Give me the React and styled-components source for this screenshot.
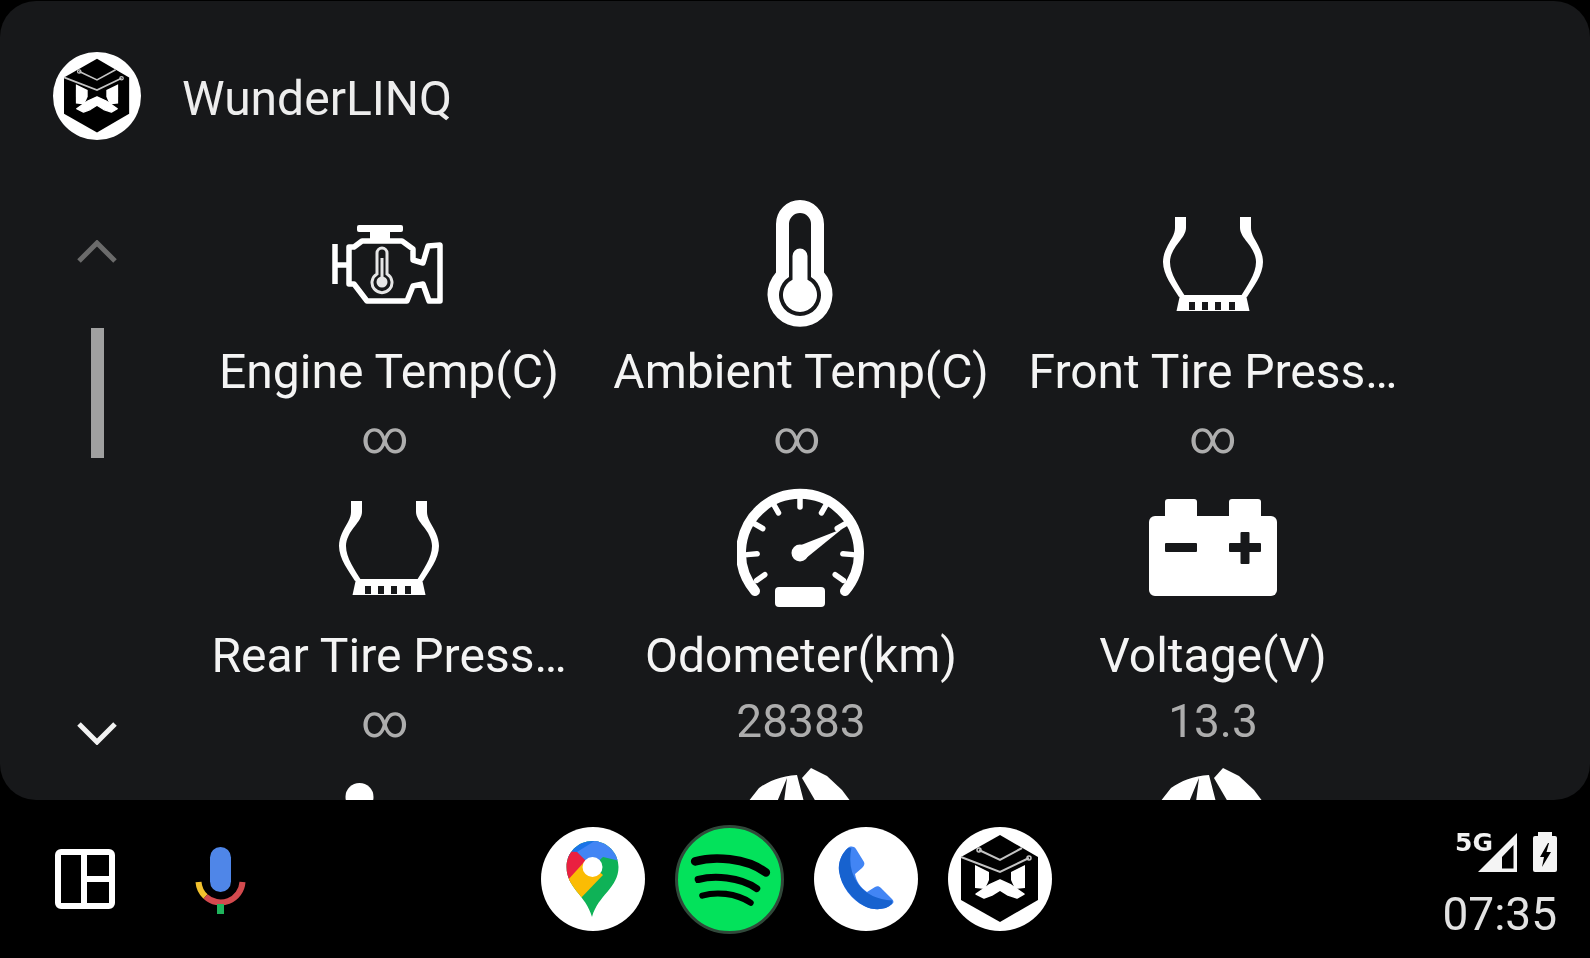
import React from 'react';
import styled, { createGlobalStyle } from 'styled-components';

const GlobalStyle = createGlobalStyle`
	html, body {
		margin: 0;
		padding: 0;
		background: #000;
		font-family: 'Roboto', 'Liberation Sans', sans-serif;
	}
`;

const Screen = styled.div`
	width: 1590px;
	height: 958px;
	padding-top: 1px;
	box-sizing: border-box;
	background: #000;
	display: flex;
	flex-direction: column;
	overflow: hidden;
	filter: blur(0.7px);
`;

const Panel = styled.main`
	height: 799px;
	flex-shrink: 0;
	background: #17181a;
	border-radius: 36px;
	overflow: hidden;
`;

const Header = styled.header`
	height: 199px;
	box-sizing: border-box;
	padding: 51px 0 0 53px;
	display: flex;
	align-items: flex-start;
	gap: 41px;
`;

const Title = styled.h1`
	margin: 0;
	font-size: 48px;
	font-weight: 400;
	line-height: 94px;
	color: #ededed;
`;

const Body = styled.div`
	display: flex;
`;

const Rail = styled.div`
	width: 183px;
	flex-shrink: 0;
	box-sizing: border-box;
	padding: 40px 0 0 11px;
	display: flex;
	flex-direction: column;
	align-items: center;
`;

const Thumb = styled.div`
	width: 13px;
	height: 130px;
	margin: 65px 0 264px;
	background: #a0a0a0;
`;

const Grid = styled.div`
	display: grid;
	grid-template-columns: repeat(3, 412px);
	grid-auto-rows: 284px;
`;

const Cell = styled.div`
	display: flex;
	flex-direction: column;
	align-items: center;
`;

const IconBox = styled.div`
	width: 128px;
	height: 128px;
	flex-shrink: 0;
	svg {
		display: block;
	}
`;

const Label = styled.div`
	margin-top: 14px;
	font-size: 48px;
	line-height: 60px;
	color: #f4f4f4;
	white-space: nowrap;
`;

const Value = styled.div`
	font-size: 46px;
	line-height: 70px;
	color: #adadad;
	padding-right: ${(p) => p.$shift || 0}px;
`;

const Bar = styled.footer`
	flex: 1;
	display: flex;
	align-items: center;
`;

const LeftGroup = styled.div`
	width: 541px;
	flex-shrink: 0;
	box-sizing: border-box;
	padding-left: 55px;
	display: flex;
	align-items: center;
	gap: 80px;
	svg {
		display: block;
	}
`;

const MicWrap = styled.div`
	margin-top: 3px;
`;

const Dock = styled.div`
	display: flex;
	align-items: center;
	gap: 30px;
`;

const AppIcon = styled.div`
	width: ${(p) => p.$size || 104}px;
	height: ${(p) => p.$size || 104}px;
	flex-shrink: 0;
	border-radius: 50%;
	svg {
		display: block;
	}
`;

const Status = styled.div`
	margin-left: auto;
	padding-right: 33px;
	align-self: flex-start;
	margin-top: 32px;
	display: flex;
	flex-direction: column;
	align-items: flex-end;
`;

const StatusIcons = styled.div`
	display: flex;
	align-items: flex-end;
	gap: 16px;
	svg {
		display: block;
	}
`;

const Signal = styled.div`
	position: relative;
	width: 39px;
	height: 40px;
	display: flex;
	align-items: flex-end;
`;

const NetBadge = styled.span`
	position: absolute;
	right: 24px;
	top: -1px;
	font-family: 'DejaVu Sans', sans-serif;
	font-size: 25px;
	font-weight: 700;
	line-height: 24px;
	color: #f2f2f2;
`;

const Clock = styled.div`
	margin-top: 12px;
	font-size: 46px;
	line-height: 60px;
	color: #e2e2e2;
`;

const WHITE = '#fff';
const PANEL = '#17181a';

const WunderLogo = ({ size }) => (
	<svg width={size} height={size} viewBox="0 0 104 104">
		<circle cx="52" cy="52" r="52" fill={WHITE} />
		<polygon points="52,8 90,30 90,73 52,95 13,73 13,30" fill="#000" />
		<g fill="none" stroke="#c4c4c4" strokeWidth="2">
			<polyline points="13,30 52,45 81,31" />
			<polyline points="31,23 52,33 74,21" />
		</g>
		<circle cx="31" cy="23" r="2" fill="none" stroke="#c4c4c4" strokeWidth="1.5" />
		<circle cx="81" cy="31" r="2" fill="none" stroke="#c4c4c4" strokeWidth="1.5" />
		<polygon points="27,38 41,45 41,53 37,62 27,61" fill={WHITE} />
		<polygon points="77,38 63,45 63,53 67,62 77,61" fill={WHITE} />
		<polygon points="28,67 41,58 52,53 63,58 76,67 69,71 60,68 52,63 44,68 36,71" fill={WHITE} stroke={WHITE} strokeWidth="1.5" strokeLinejoin="round" />
	</svg>
);

const ChevronUp = () => (
	<svg width="40" height="23" viewBox="0 0 40 23">
		<polyline points="2,21 20,3 38,21" fill="none" stroke="#6b6b6b" strokeWidth="5" />
	</svg>
);

const ChevronDown = () => (
	<svg width="40" height="23" viewBox="0 0 40 23">
		<polyline points="2,2 20,20 38,2" fill="none" stroke="#f2f2f2" strokeWidth="5" />
	</svg>
);

const EngineIcon = () => (
	<svg width="128" height="128" viewBox="0 0 128 128">
		<rect x="32" y="25" width="46" height="7" rx="2" fill={WHITE} />
		<rect x="45" y="31" width="20" height="10" fill={WHITE} />
		<g fill="none" stroke={WHITE} strokeWidth="5.5" strokeLinejoin="round">
			<polyline points="10,44 10,84" />
			<polyline points="10,65 24,65" />
			<path d="M24,47 L29,47 L37,41 L77,41 L88,49 L88,60 L98,63 L103,46 L115,45 L115,101 L104,101 L98,84 L88,86 L82,101 L42,101 L29,84 L24,84 Z" />
		</g>
		<path d="M52,53 a5,5 0 0 1 10,0 V74 a10,10 0 1 1 -10,0 Z" fill="none" stroke="#e6e6e6" strokeWidth="3" />
		<rect x="55.5" y="58" width="3" height="20" fill="#e6e6e6" />
		<circle cx="57" cy="82" r="5.5" fill="#e6e6e6" />
	</svg>
);

const ThermometerIcon = () => (
	<svg width="128" height="128" viewBox="0 0 128 128">
		<path d="M39,24 a24,24 0 0 1 48,0 V72.4 a32.5,32.5 0 1 1 -48,0 Z" fill={WHITE} />
		<path d="M52,24 a11,11 0 0 1 22,0 V77.1 a21,21 0 1 1 -22,0 Z" fill={PANEL} />
		<path d="M55.5,56 a7.5,7.5 0 0 1 15,0 V79.7 a17,17 0 1 1 -15,0 Z" fill={WHITE} />
	</svg>
);

const TIRE_WALL = 'M26,17 H37 V28 C37,33 33,38 30,42 C25,48 21,55 21,62 C21,74 30,86 36,96 L30,97 C24,87 14,75 14,62 C14,53 19,45 23,38 C25,34 26,31 26,28 Z';

const TireIcon = () => (
	<svg width="128" height="128" viewBox="0 0 128 128">
		<g fill={WHITE}>
			<path d={TIRE_WALL} />
			<path transform="translate(128 0) scale(-1 1)" d={TIRE_WALL} />
			<path d="M31,95 H97 L100.5,111 H27.5 Z" />
		</g>
		{[40, 53, 66, 80].map((x) => <rect key={x} x={x} y="102" width="6" height="8" fill={PANEL} />)}
	</svg>
);

const GaugeIcon = () => {
	const ticks = [-125, -95, -60, -30, 0, 30, 60, 95, 125];
	return (
		<svg width="128" height="128" viewBox="0 0 128 128">
			<path d="M18,107 A59,59 0 1 1 108,107" fill="none" stroke={WHITE} strokeWidth="10" strokeLinecap="round" />
			{ticks.map((a) => (
				<line key={a} x1="63" y1="13" x2="63" y2="23" stroke={WHITE} strokeWidth="5.5" strokeLinecap="round" transform={`rotate(${a} 63 66)`} />
			))}
			<circle cx="63" cy="69" r="8.5" fill={WHITE} />
			<polygon points="105,45 68,75 59,63" fill={WHITE} />
			<rect x="38" y="103" width="50" height="20" rx="4" fill={WHITE} />
		</svg>
	);
};

const BatteryIcon = () => (
	<svg width="128" height="128" viewBox="0 0 128 128">
		<rect x="16" y="15" width="32" height="24" rx="3" fill={WHITE} />
		<rect x="80" y="15" width="32" height="24" rx="3" fill={WHITE} />
		<rect x="0" y="32" width="128" height="80" rx="6" fill={WHITE} />
		<rect x="16" y="59" width="32" height="9" rx="1" fill={PANEL} />
		<rect x="80" y="59" width="32" height="9" rx="1" fill={PANEL} />
		<rect x="91.5" y="48" width="9" height="32" rx="1" fill={PANEL} />
	</svg>
);

const DotIcon = () => (
	<svg width="128" height="128" viewBox="0 0 128 128">
		<circle cx="34.5" cy="29" r="14" fill={WHITE} />
	</svg>
);

const DomeIcon = () => (
	<svg width="128" height="128" viewBox="0 0 128 128">
		<path d="M11,34 L22,20 C32,13 44,8 60,7 L67,34 H47 L50,10 L40,34 Z" fill={WHITE} />
		<path d="M74,0 L90,8 L105,22 L114,34 H79 L65,10 Z" fill={WHITE} />
	</svg>
);

const LayoutIcon = () => (
	<svg width="60" height="60" viewBox="0 0 60 60">
		<rect x="3" y="3" width="54" height="54" rx="3" fill="none" stroke={WHITE} strokeWidth="6" />
		<line x1="29" y1="3" x2="29" y2="57" stroke={WHITE} strokeWidth="6" />
		<line x1="29" y1="30" x2="57" y2="30" stroke={WHITE} strokeWidth="6" />
	</svg>
);

const MicIcon = () => (
	<svg width="52" height="68" viewBox="0 0 52 68">
		<rect x="15" y="0" width="21" height="45" rx="10.5" fill="#4f86e8" />
		<path d="M3.5,35 A22,22 0 0 0 10.5,49.5" fill="none" stroke="#f2c12e" strokeWidth="6" />
		<path d="M10.5,49.5 A22,22 0 0 0 47.5,35" fill="none" stroke="#d34a4e" strokeWidth="6" />
		<rect x="22" y="57" width="7" height="10" fill="#1fb45c" />
	</svg>
);

const PIN = 'M51.5,14 C37,14 25.5,25.5 25.5,40 C25.5,61 45,68 51,90 C57,68 77.5,61 77.5,40 C77.5,25.5 66,14 51.5,14 Z';

const MapsLogo = () => (
	<svg width="104" height="104" viewBox="0 0 104 104">
		<circle cx="52" cy="52" r="52" fill={WHITE} />
		<clipPath id="pinClip">
			<path d={PIN} />
		</clipPath>
		<g clipPath="url(#pinClip)">
			<rect x="20" y="10" width="64" height="84" fill="#0fb257" />
			<polygon points="20,10 60,10 51,40 20,30" fill="#1a73e8" />
			<polygon points="60,10 84,10 84,35 62,30 51,40 36,25" fill="#4285f4" />
			<polygon points="20,24 36,25 51,40 26,58 20,58" fill="#ea2040" />
			<polygon points="26,54 45,33 62,48 38,73 30,65" fill="#fbbc04" />
		</g>
		<circle cx="51.5" cy="40" r="10" fill={WHITE} />
	</svg>
);

const SpotifyLogo = () => (
	<svg width="109" height="109" viewBox="0 0 108 108">
		<circle cx="54" cy="54" r="52.5" fill="#03e25b" stroke="#31483a" strokeWidth="3" />
		<g fill="none" stroke="#000" strokeLinecap="round">
			<path d="M20,36 C38,31 70,32 90,47" strokeWidth="8.5" />
			<path d="M23,54 C38,50 64,51 81,63" strokeWidth="7" />
			<path d="M27,70 C40,66 60,67 75,77" strokeWidth="6" />
		</g>
	</svg>
);

const HANDSET = 'M34,21 C36,19 40,19 42,22 L50,35 C51,37 50,39 48,41 L41,47 C42,54 47,61 53,65 L61,60 C63,59 65,59 67,61 L78,72 C80,74 80,76 78,77 C72,83 60,84 50,79 C38,73 27,60 25,44 C24,35 28,26 34,21 Z';

const PhoneLogo = () => (
	<svg width="104" height="104" viewBox="0 0 104 104">
		<circle cx="52" cy="52" r="52" fill={WHITE} />
		<clipPath id="handsetClip">
			<path d={HANDSET} />
		</clipPath>
		<path d={HANDSET} fill="#4285f4" />
		<path d="M31,20 C25,50 42,78 78,80" fill="none" stroke="#1762cf" strokeWidth="13" clipPath="url(#handsetClip)" />
	</svg>
);

const SignalIcon = () => (
	<svg width="39" height="39" viewBox="0 0 39 39">
		<path d="M0,39 L39,0 V39 Z M24,35.5 H35.5 V12 L24,24 Z" fill="#f4f4f4" fillRule="evenodd" />
	</svg>
);

const PhoneBattery = () => (
	<svg width="24" height="40" viewBox="0 0 24 40">
		<rect x="5" y="0" width="14" height="6" fill="#f4f4f4" />
		<rect x="0" y="4" width="24" height="36" rx="2" fill="#f4f4f4" />
		<polygon points="15,11 7,25 11,25 9,35 18,20 13.5,20 16,11" fill="#000" />
	</svg>
);

const items = [
	{ id: 'engine', icon: <EngineIcon />, label: 'Engine Temp(C)', value: '∞', shift: 8 },
	{ id: 'ambient', icon: <ThermometerIcon />, label: 'Ambient Temp(C)', value: '∞', shift: 8 },
	{ id: 'front', icon: <TireIcon />, label: 'Front Tire Press…', value: '∞' },
	{ id: 'rear', icon: <TireIcon />, label: 'Rear Tire Press…', value: '∞', shift: 8 },
	{ id: 'odo', icon: <GaugeIcon />, label: 'Odometer(km)', value: '28383' },
	{ id: 'volt', icon: <BatteryIcon />, label: 'Voltage(V)', value: '13.3' },
	{ id: 'row3a', icon: <DotIcon /> },
	{ id: 'row3b', icon: <DomeIcon /> },
	{ id: 'row3c', icon: <DomeIcon /> },
];

const App = () => (
	<>
		<GlobalStyle />
		<Screen>
			<Panel>
				<Header>
					<AppIcon $size={88}>
						<WunderLogo size={88} />
					</AppIcon>
					<Title>WunderLINQ</Title>
				</Header>
				<Body>
					<Rail>
						<ChevronUp />
						<Thumb />
						<ChevronDown />
					</Rail>
					<Grid>
						{items.map((item) => (
							<Cell key={item.id}>
								<IconBox>{item.icon}</IconBox>
								{item.label && <Label>{item.label}</Label>}
								{item.value && <Value $shift={item.shift}>{item.value}</Value>}
							</Cell>
						))}
					</Grid>
				</Body>
			</Panel>
			<Bar>
				<LeftGroup>
					<LayoutIcon />
					<MicWrap><MicIcon /></MicWrap>
				</LeftGroup>
				<Dock>
					<AppIcon><MapsLogo /></AppIcon>
					<AppIcon $size={109}><SpotifyLogo /></AppIcon>
					<AppIcon><PhoneLogo /></AppIcon>
					<AppIcon><WunderLogo size={104} /></AppIcon>
				</Dock>
				<Status>
					<StatusIcons>
						<Signal>
							<NetBadge>5G</NetBadge>
							<SignalIcon />
						</Signal>
						<PhoneBattery />
					</StatusIcons>
					<Clock>07:35</Clock>
				</Status>
			</Bar>
		</Screen>
	</>
);

export default App;
